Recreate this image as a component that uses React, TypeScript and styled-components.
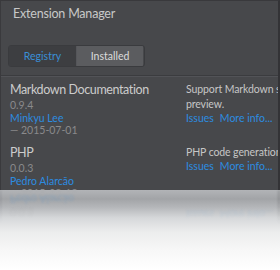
import React, { ReactElement } from 'react';
import styled, { createGlobalStyle } from 'styled-components';

const GlobalStyle = createGlobalStyle`
    html, body {
        margin: 0;
        padding: 0;
        background: #ffffff;
    }
    body {
        width: 280px;
        height: 270px;
        overflow: hidden;
        font-family: Lato, 'Noto Sans', sans-serif;
    }
`;

const Stage = styled.div`
    width: 280px;
    height: 270px;
    display: flex;
    flex-direction: column;
    overflow: hidden;
`;

const Dialog = styled.div<{ ghost?: boolean }>`
    height: 190px;
    flex: none;
    overflow: hidden;
    background: ${({ ghost }) => (ghost ? 'transparent' : '#47484b')};
    border-top: 1px solid #39393c;
    border-left: 1px solid #3a3a3d;
    border-right: 2px solid #333336;
    box-sizing: border-box;
    display: flex;
    flex-direction: column;
`;

const Header = styled.div`
    height: 75px;
    flex: none;
    box-sizing: border-box;
    padding: 4px 0 0 12px;
    border-bottom: 1px solid #3b3c3f;
    display: flex;
    flex-direction: column;
`;

const Title = styled.div`
    font-size: 12.5px;
    line-height: 17px;
    letter-spacing: -0.2px;
    color: #c8c8c8;
`;

const Tabs = styled.div`
    margin-top: 23px;
    margin-left: -5px;
    display: flex;
    width: 135px;
    height: 20px;
    border-radius: 3px;
    overflow: hidden;
    border: 1px solid #3a3b3e;
`;

const Tab = styled.div<{ active?: boolean }>`
    flex: none;
    width: ${({ active }) => (active ? '67px' : '66px')};
    display: flex;
    align-items: center;
    justify-content: center;
    font-size: 10.5px;
    color: ${({ active }) => (active ? '#3a8fd6' : '#dcdcdc')};
    background: ${({ active }) => (active ? '#3d3e41' : '#5b5c5f')};
    border-left: ${({ active }) => (active ? 'none' : '1px solid #55565a')};
`;

const List = styled.div`
    border-top: 1px solid #525357;
    display: flex;
    flex-direction: column;
`;

const Row = styled.div`
    display: grid;
    grid-template-columns: 176px 1fr;
    padding: 4px 0 0 9px;
    height: 59px;
`;

const Info = styled.div`
    display: flex;
    flex-direction: column;
`;

const Name = styled.div`
    font-size: 12.5px;
    line-height: 17px;
    letter-spacing: -0.4px;
    margin-bottom: 1px;
    color: #cccccc;
    white-space: nowrap;
`;

const Meta = styled.div<{ link?: boolean }>`
    font-size: 10.5px;
    line-height: 12.5px;
    color: ${({ link }) => (link ? '#2c8ce0' : '#8a8a8c')};
    white-space: nowrap;
`;

const Description = styled.div`
    padding-top: 1px;
    font-size: 10.5px;
    line-height: 14px;
    letter-spacing: -0.1px;
    color: #c6c6c6;
    white-space: nowrap;
`;

const Links = styled.div`
    display: flex;
    gap: 6px;
    font-size: 10.5px;
    line-height: 14px;
    color: #2c8ce0;
`;

// floor under the dialog: grey fading to white, with a faint mirror of the text
const Reflection = styled.div`
    flex: 1;
    overflow: hidden;
    background: linear-gradient(
        to bottom,
        #b2b4b7 0px,
        #a2a4a7 9px,
        #b4b6b9 17px,
        #d6d8da 28px,
        #eceded 42px,
        #f7f7f7 60px,
        #ffffff 80px
    );
`;

const MirrorFade = styled.div`
    height: 80px;
    overflow: hidden;
    -webkit-mask-image: linear-gradient(to bottom, #000 0px, #000 10px, transparent 34px);
    mask-image: linear-gradient(to bottom, #000 0px, #000 10px, transparent 34px);
`;

const Mirror = styled.div`
    transform: scaleY(-1);
    opacity: 0.2;
    filter: blur(0.8px);
`;

const extensions = [
    {
        name: 'Markdown Documentation',
        version: '0.9.4',
        author: 'Minkyu Lee',
        date: '— 2015-07-01',
        description: ['Support Markdown syntax in documentation', 'preview.'],
    },
    {
        name: 'PHP',
        version: '0.0.3',
        author: 'Pedro Alarcão',
        date: '— 2015-08-18',
        description: ['PHP code generation.'],
    },
];

const Panel = ({ ghost }: { ghost?: boolean }): ReactElement => (
    <Dialog ghost={ghost}>
        <Header>
            <Title>Extension Manager</Title>
            <Tabs>
                <Tab active>Registry</Tab>
                <Tab>Installed</Tab>
            </Tabs>
        </Header>
        <List>
            {extensions.map((ext) => (
                <Row key={ext.name}>
                    <Info>
                        <Name>{ext.name}</Name>
                        <Meta>{ext.version}</Meta>
                        <Meta link>{ext.author}</Meta>
                        <Meta>{ext.date}</Meta>
                    </Info>
                    <div>
                        {ext.description.map((line) => (
                            <Description key={line}>{line}</Description>
                        ))}
                        <Links>
                            <span>Issues</span>
                            <span>More info...</span>
                        </Links>
                    </div>
                </Row>
            ))}
        </List>
    </Dialog>
);

export default (): ReactElement => (
    <Stage>
        <GlobalStyle />
        <Panel />
        <Reflection aria-hidden>
            <MirrorFade>
                <Mirror>
                    <Panel ghost />
                </Mirror>
            </MirrorFade>
        </Reflection>
    </Stage>
);
